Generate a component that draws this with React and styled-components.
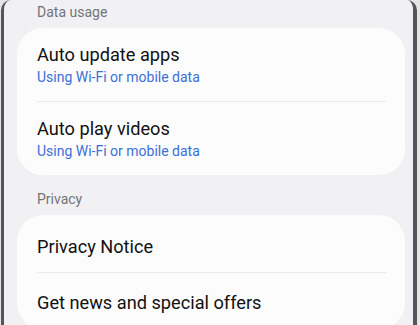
import React from 'react';
import styled, { createGlobalStyle } from 'styled-components';

const GlobalStyle = createGlobalStyle`
  html, body {
    margin: 0;
    padding: 0;
    background: #e4e5e4;
    font-family: Roboto, "Noto Sans", sans-serif;
    -webkit-font-smoothing: antialiased;
  }
`;

const Phone = styled.div`
  box-sizing: border-box;
  width: 416px;
  height: 325px;
  margin-left: 1px;
  border-left: 3px solid #55555d;
  border-right: 4px solid #55555d;
  border-radius: 10px 10px 0 0;
  overflow: hidden;
`;

const Screen = styled.div`
  box-sizing: border-box;
  height: 100%;
  padding: 2px 8px 0 13px;
  background: #f1f1f3;
  display: flex;
  flex-direction: column;
  gap: 14px;
`;

const Section = styled.section`
  display: flex;
  flex-direction: column;
  gap: 6px;
`;

const SectionTitle = styled.div`
  padding: 0 20px;
  font-size: 14px;
  line-height: 20px;
  color: #747478;
`;

const Card = styled.div`
  background: #fcfcfc;
  border-radius: 26px;
  padding: 0 19px 0 20px;
`;

const Item = styled.div`
  padding: ${({ single, divided }) =>
    single ? (divided ? '18px 0 14px' : '20px 0 13px') : '15px 0 14px'};
  border-top: ${({ divided }) => (divided ? '1px solid #ebebed' : 'none')};
`;

const ItemTitle = styled.div`
  font-size: 18.2px;
  line-height: 24px;
  color: #111111;
`;

const ItemSub = styled.div`
  font-size: 14px;
  line-height: 20px;
  color: #3d6fd8;
`;

const sections = [
  {
    title: 'Data usage',
    items: [
      { title: 'Auto update apps', sub: 'Using Wi-Fi or mobile data' },
      { title: 'Auto play videos', sub: 'Using Wi-Fi or mobile data' },
    ],
  },
  {
    title: 'Privacy',
    items: [{ title: 'Privacy Notice' }, { title: 'Get news and special offers' }],
  },
];

const App = () => (
  <>
    <GlobalStyle />
    <Phone>
      <Screen>
        {sections.map((section) => (
          <Section key={section.title}>
            <SectionTitle>{section.title}</SectionTitle>
            <Card>
              {section.items.map((item, i) => (
                <Item key={item.title} single={!item.sub} divided={i > 0}>
                  <ItemTitle>{item.title}</ItemTitle>
                  {item.sub && <ItemSub>{item.sub}</ItemSub>}
                </Item>
              ))}
            </Card>
          </Section>
        ))}
      </Screen>
    </Phone>
  </>
);

export default App;
